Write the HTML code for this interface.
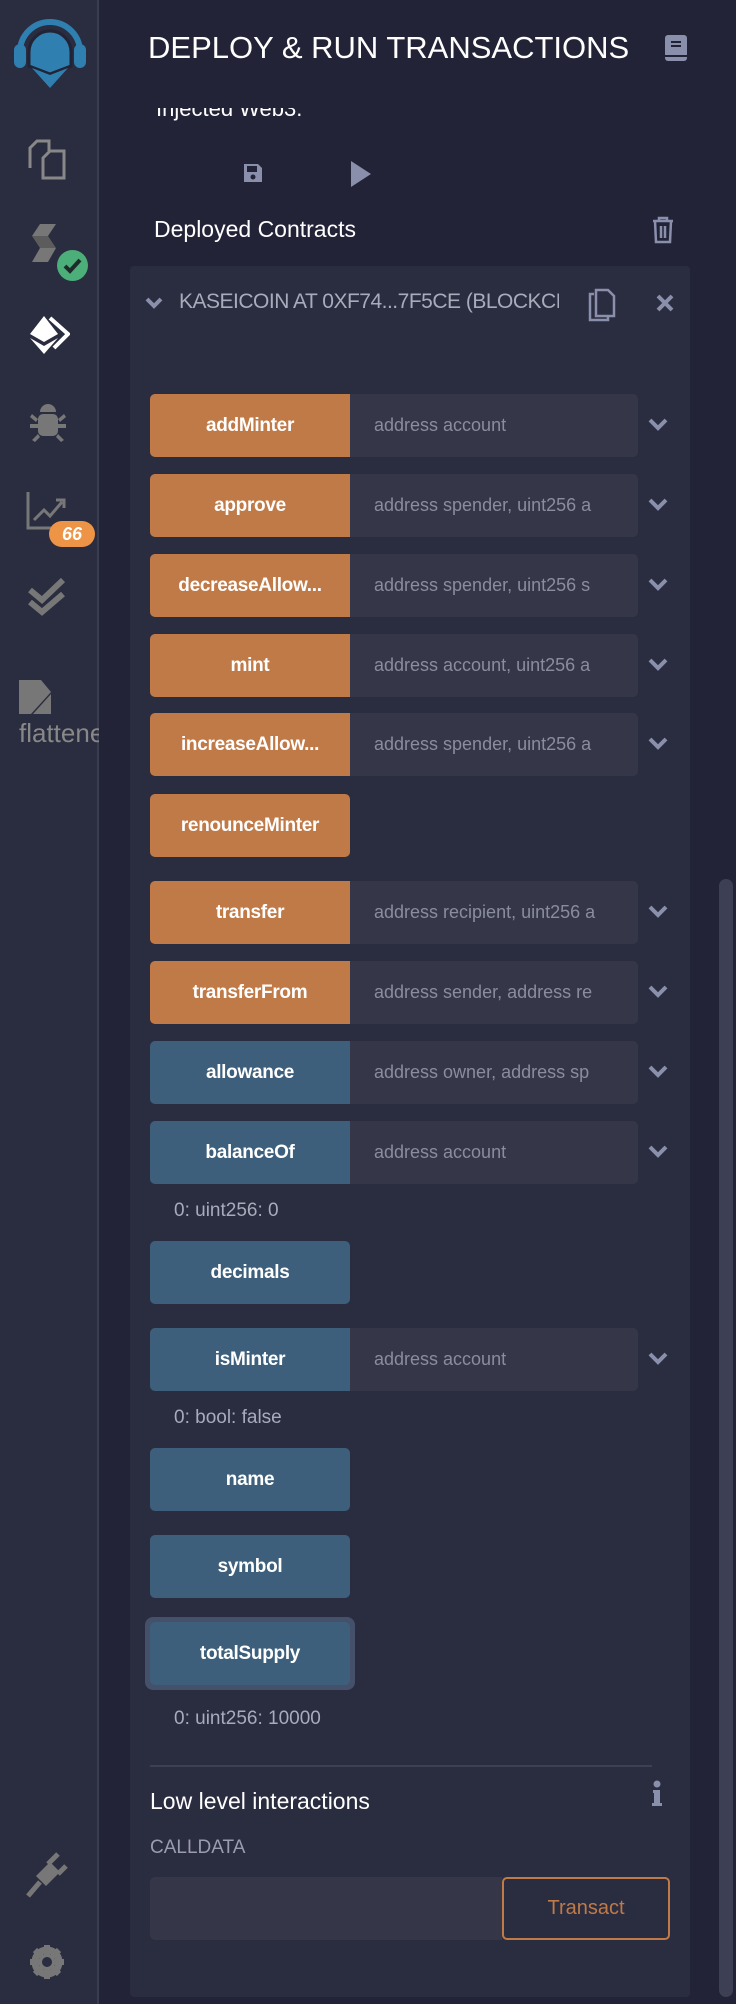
<!DOCTYPE html>
<html><head><meta charset="utf-8"><style>
*{box-sizing:border-box;margin:0;padding:0}
body{width:736px;height:2004px;overflow:hidden;background:#222336;font-family:"Liberation Sans",sans-serif;position:relative;color:#fff}
.side{position:absolute;left:0;top:0;width:99px;height:2004px;background:#2a2c3f;border-right:2px solid #3a3c50}
.a{position:absolute}
.card{position:absolute;left:130px;top:266px;width:560px;height:1731px;background:#2a2c3f;border-radius:4px}
.btn{position:absolute;left:150px;width:200px;height:63px;border-radius:5px 0 0 5px;color:#fff;font-weight:bold;font-size:19px;text-align:center;line-height:63px;letter-spacing:-0.3px}
.o{background:#c07a48}
.b{background:#3d5f7b}
.full{border-radius:5px}
.inp{position:absolute;left:350px;width:288px;height:63px;background:#353648;border-radius:0 5px 5px 0;color:#8a8d9e;font-size:18px;line-height:63px;padding-left:24px;white-space:nowrap;overflow:hidden}
.inp span{display:block;width:240px;overflow:hidden}
.chev{position:absolute;left:648px;width:20px;height:14px}
.out{position:absolute;left:174px;color:#a8abbb;font-size:19px}
</style></head><body>
<div class="side"></div>
<svg class="a" style="left:8px;top:14px" width="84" height="76" viewBox="0 0 84 76">
<path d="M12 38 A30 30 0 0 1 72 38" fill="none" stroke="#2f7fb0" stroke-width="6"/>
<rect x="6" y="30" width="12" height="24" rx="6" fill="#2f7fb0"/>
<rect x="66" y="30" width="12" height="24" rx="6" fill="#2f7fb0"/>
<path d="M21 38 A21 21 0 0 1 63 38 L63 52 L42 60 L21 52 Z" fill="#2f7fb0" stroke="#222336" stroke-width="3"/>
<path d="M24 54 L42 61 L60 54 L42 74 Z" fill="#2f7fb0"/>
</svg>
<svg class="a" style="left:27px;top:138px" width="42" height="42" viewBox="0 0 42 42" fill="none" stroke="#888" stroke-width="3"><path d="M3 30V10l7-7h12v10"/><path d="M16 40V20l7-7h14v27z"/></svg>
<svg class="a" style="left:32px;top:222px" width="30" height="46" viewBox="0 0 30 46"><path d="M8 2h16l-8 12H0z" fill="#777"/><path d="M0 14h16l8 12H8z" fill="#5c5c5c"/><path d="M8 26h16l-8 14H0z" fill="#777"/></svg>
<div class="a" style="left:57px;top:250px;width:31px;height:31px;border-radius:50%;background:#4cae79"></div>
<svg class="a" style="left:62px;top:257px" width="21" height="17" viewBox="0 0 21 17"><path d="M3 9l5 5L18 3" fill="none" stroke="#1e2b2a" stroke-width="4"/></svg>
<svg class="a" style="left:26px;top:314px" width="44" height="42" viewBox="0 0 44 42"><path d="M18 2L4 20l14 8 14-8z" fill="#fff"/><path d="M4 24l14 16 14-16-14 8z" fill="#fff"/><path d="M24 4l18 16-14 14" fill="none" stroke="#fff" stroke-width="4"/></svg>
<svg class="a" style="left:28px;top:402px" width="40" height="40" viewBox="0 0 40 40" fill="#777"><path d="M12 10a8 8 0 0 1 16 0z"/><rect x="10" y="12" width="20" height="22" rx="5"/><path d="M2 22h36v4H2zM4 12l6 5-2 3-6-5zM36 12l-6 5 2 3 6-5zM4 38l6-6 2 3-5 5zM36 38l-6-6-2 3 5 5z"/></svg>
<svg class="a" style="left:26px;top:490px" width="42" height="40" viewBox="0 0 42 40" fill="none" stroke="#777" stroke-width="3"><path d="M2 2v36h38"/><path d="M8 30l10-10 6 6 12-14"/><path d="M30 10h8v8" /></svg>
<div class="a" style="left:49px;top:521px;width:46px;height:26px;border-radius:13px;background:#ed9447;color:#fff;font-style:italic;font-weight:bold;font-size:18px;text-align:center;line-height:26px">66</div>
<svg class="a" style="left:27px;top:576px" width="40" height="40" viewBox="0 0 40 40" fill="none" stroke="#777" stroke-width="6"><path d="M3 14l12 10L36 4"/><path d="M3 26l12 10L36 18"/></svg>
<svg class="a" style="left:19px;top:680px" width="34" height="34" viewBox="0 0 34 34"><path d="M0 0h22l10 12-20 22H0z" fill="#777"/><path d="M14 34l18-20v20z" fill="#777"/></svg>
<div class="a" style="left:19px;top:718px;width:80px;overflow:hidden;color:#888;font-size:26px;white-space:nowrap">flattener</div>
<svg class="a" style="left:26px;top:1852px" width="42" height="46" viewBox="0 0 42 46"><path d="M10 24l14-14 10 10-14 14z" fill="#777"/><path d="M22 12l10-10M32 22l8-8" stroke="#777" stroke-width="5"/><path d="M14 30L2 44" stroke="#777" stroke-width="5"/></svg>
<svg class="a" style="left:29px;top:1944px" width="36" height="36" viewBox="0 0 36 36"><circle cx="18" cy="18" r="12" fill="none" stroke="#777" stroke-width="7"/><g stroke="#777" stroke-width="6"><path d="M18 1v34M1 18h34M6 6l24 24M30 6L6 30"/></g><circle cx="18" cy="18" r="5" fill="#2a2c3f"/></svg>

<div class="a" style="left:148px;top:30px;font-size:31px;letter-spacing:0px;white-space:nowrap">DEPLOY &amp; RUN TRANSACTIONS</div>
<svg class="a" style="left:664px;top:34px" width="24" height="28" viewBox="0 0 24 28"><rect x="1" y="1" width="22" height="26" rx="3" fill="#8a8fab"/><path d="M7 8h10M7 12h10" stroke="#222336" stroke-width="2"/><path d="M1 22h22" stroke="#222336" stroke-width="2"/></svg>
<div class="a" style="left:156px;top:108px;height:16px;overflow:hidden;font-size:22px;width:300px"><div style="margin-top:-12px">Injected Web3.</div></div>
<svg class="a" style="left:242px;top:162px" width="22" height="22" viewBox="0 0 22 22"><path d="M2 2h14l4 4v14H2z" fill="#8a8fab"/><rect x="5" y="4" width="10" height="6" fill="#222336"/><circle cx="11" cy="15" r="2.5" fill="#222336"/></svg>
<svg class="a" style="left:350px;top:160px" width="22" height="28" viewBox="0 0 22 28"><path d="M1 1l20 13L1 27z" fill="#8a8fab"/></svg>
<div class="a" style="left:154px;top:216px;font-size:23px">Deployed Contracts</div>
<svg class="a" style="left:652px;top:216px" width="22" height="28" viewBox="0 0 22 28" fill="none" stroke="#8a8fab" stroke-width="2.5"><path d="M1 5h20M7 5V2h8v3M3 5l1 21h14l1-21M9 10v12M13 10v12"/></svg>

<div class="card"></div>
<svg class="a" style="left:145px;top:297px" width="18" height="13" viewBox="0 0 18 13"><path d="M2 2l7 7 7-7" fill="none" stroke="#8a8fab" stroke-width="4"/></svg>
<div class="a" style="left:179px;top:290px;width:380px;overflow:hidden;white-space:nowrap;color:#a8abbb;font-size:21px;letter-spacing:-0.5px">KASEICOIN AT 0XF74...7F5CE (BLOCKCHAIN)</div>
<svg class="a" style="left:588px;top:288px" width="28" height="34" viewBox="0 0 28 34" fill="none" stroke="#8a8fab" stroke-width="2.5"><path d="M6 6H2v26h18v-4"/><path d="M8 2h12l6 6v20H8z"/></svg>
<svg class="a" style="left:656px;top:294px" width="18" height="18" viewBox="0 0 18 18"><path d="M2 2l14 14M16 2L2 16" stroke="#8a8fab" stroke-width="4"/></svg>

<div class="btn o" style="top:394px">addMinter</div><div class="inp" style="top:394px"><span>address account</span></div>
<div class="btn o" style="top:474px">approve</div><div class="inp" style="top:474px"><span>address spender, uint256 a</span></div>
<div class="btn o" style="top:554px">decreaseAllow...</div><div class="inp" style="top:554px"><span>address spender, uint256 s</span></div>
<div class="btn o" style="top:634px">mint</div><div class="inp" style="top:634px"><span>address account, uint256 a</span></div>
<div class="btn o" style="top:713px">increaseAllow...</div><div class="inp" style="top:713px"><span>address spender, uint256 a</span></div>
<div class="btn o full" style="top:794px">renounceMinter</div>
<div class="btn o" style="top:881px">transfer</div><div class="inp" style="top:881px"><span>address recipient, uint256 a</span></div>
<div class="btn o" style="top:961px">transferFrom</div><div class="inp" style="top:961px"><span>address sender, address re</span></div>
<div class="btn b" style="top:1041px">allowance</div><div class="inp" style="top:1041px"><span>address owner, address sp</span></div>
<div class="btn b" style="top:1121px">balanceOf</div><div class="inp" style="top:1121px"><span>address account</span></div>
<div class="out" style="top:1200px">0: uint256: 0</div>
<div class="btn b full" style="top:1241px">decimals</div>
<div class="btn b" style="top:1328px">isMinter</div><div class="inp" style="top:1328px"><span>address account</span></div>
<div class="out" style="top:1407px">0: bool: false</div>
<div class="btn b full" style="top:1448px">name</div>
<div class="btn b full" style="top:1535px">symbol</div>
<div class="a" style="left:145px;top:1617px;width:210px;height:73px;border-radius:8px;background:#45506a"></div>
<div class="btn b full" style="top:1622px">totalSupply</div>
<div class="out" style="top:1708px">0: uint256: 10000</div>
<svg class="chev" style="top:418px" viewBox="0 0 20 14"><path d="M2 2l8 8 8-8" fill="none" stroke="#8a8fab" stroke-width="4"/></svg>
<svg class="chev" style="top:498px" viewBox="0 0 20 14"><path d="M2 2l8 8 8-8" fill="none" stroke="#8a8fab" stroke-width="4"/></svg>
<svg class="chev" style="top:578px" viewBox="0 0 20 14"><path d="M2 2l8 8 8-8" fill="none" stroke="#8a8fab" stroke-width="4"/></svg>
<svg class="chev" style="top:658px" viewBox="0 0 20 14"><path d="M2 2l8 8 8-8" fill="none" stroke="#8a8fab" stroke-width="4"/></svg>
<svg class="chev" style="top:737px" viewBox="0 0 20 14"><path d="M2 2l8 8 8-8" fill="none" stroke="#8a8fab" stroke-width="4"/></svg>
<svg class="chev" style="top:905px" viewBox="0 0 20 14"><path d="M2 2l8 8 8-8" fill="none" stroke="#8a8fab" stroke-width="4"/></svg>
<svg class="chev" style="top:985px" viewBox="0 0 20 14"><path d="M2 2l8 8 8-8" fill="none" stroke="#8a8fab" stroke-width="4"/></svg>
<svg class="chev" style="top:1065px" viewBox="0 0 20 14"><path d="M2 2l8 8 8-8" fill="none" stroke="#8a8fab" stroke-width="4"/></svg>
<svg class="chev" style="top:1145px" viewBox="0 0 20 14"><path d="M2 2l8 8 8-8" fill="none" stroke="#8a8fab" stroke-width="4"/></svg>
<svg class="chev" style="top:1352px" viewBox="0 0 20 14"><path d="M2 2l8 8 8-8" fill="none" stroke="#8a8fab" stroke-width="4"/></svg>

<div class="a" style="left:150px;top:1765px;width:502px;height:2px;background:#3d3f52"></div>
<div class="a" style="left:150px;top:1788px;font-size:23px">Low level interactions</div>
<svg class="a" style="left:651px;top:1780px" width="12" height="26" viewBox="0 0 12 26"><circle cx="6" cy="4" r="3.5" fill="#8a8fab"/><path d="M2 10h7v13h2v3H1v-3h2v-10H2z" fill="#8a8fab"/></svg>
<div class="a" style="left:150px;top:1837px;font-size:19px;color:#9a9dad">CALLDATA</div>
<div class="a" style="left:150px;top:1877px;width:352px;height:63px;background:#353648;border-radius:5px 0 0 5px"></div>
<div class="a" style="left:502px;top:1877px;width:168px;height:63px;border:2px solid #c07a48;border-radius:5px;color:#c07a48;font-size:20px;text-align:center;line-height:59px">Transact</div>
<div class="a" style="left:719px;top:879px;width:14px;height:1118px;background:#3d3f55;border-radius:7px"></div>
</body></html>
